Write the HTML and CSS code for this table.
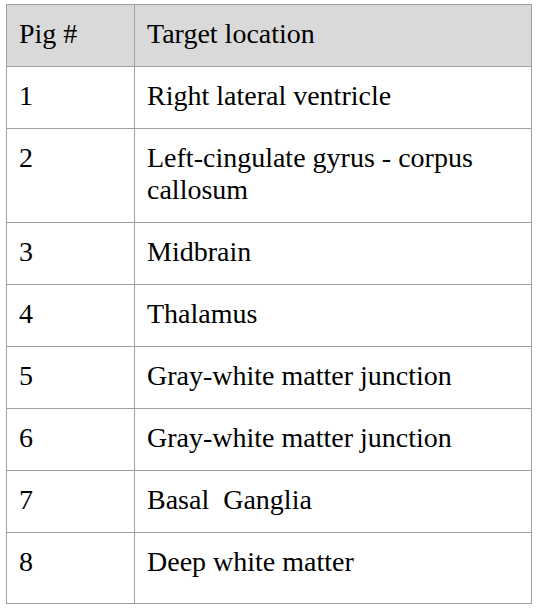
FILE: index.html
```html
<!DOCTYPE html>
<html>
<head>
<meta charset="utf-8">
<link rel="stylesheet" href="styles.css">
</head>
<body>
<table class="pig-table">
  <thead>
    <tr><th class="col-pig">Pig #</th><th>Target location</th></tr>
  </thead>
  <tbody>
    <tr><td>1</td><td>Right lateral ventricle</td></tr>
    <tr><td>2</td><td>Left-cingulate gyrus - corpus callosum</td></tr>
    <tr><td>3</td><td>Midbrain</td></tr>
    <tr><td>4</td><td>Thalamus</td></tr>
    <tr><td>5</td><td>Gray-white matter junction</td></tr>
    <tr><td>6</td><td>Gray-white matter junction</td></tr>
    <tr><td>7</td><td>Basal&nbsp; Ganglia</td></tr>
    <tr class="last-row"><td>8</td><td>Deep white matter</td></tr>
  </tbody>
</table>
</body>
</html>
```

FILE: styles.css
```css
html, body {
  margin: 0;
  padding: 0;
  background: #ffffff;
}

body {
  padding: 4px 0 0 6px;
  font-family: "Liberation Serif", "Times New Roman", serif;
  color: #000000;
}

.pig-table {
  border-collapse: collapse;
  width: 526px;
  table-layout: fixed;
}

.pig-table th,
.pig-table td {
  border: 1px solid #a0a0a0;
  font-size: 28px;
  font-weight: normal;
  line-height: 32px;
  text-align: left;
  vertical-align: top;
  padding: 13px 12px 16px 12px;
}

.pig-table th {
  background: #d9d9d9;
}

.pig-table .col-pig {
  width: 103px;
}

.pig-table .last-row td {
  padding-bottom: 25px;
}
```
